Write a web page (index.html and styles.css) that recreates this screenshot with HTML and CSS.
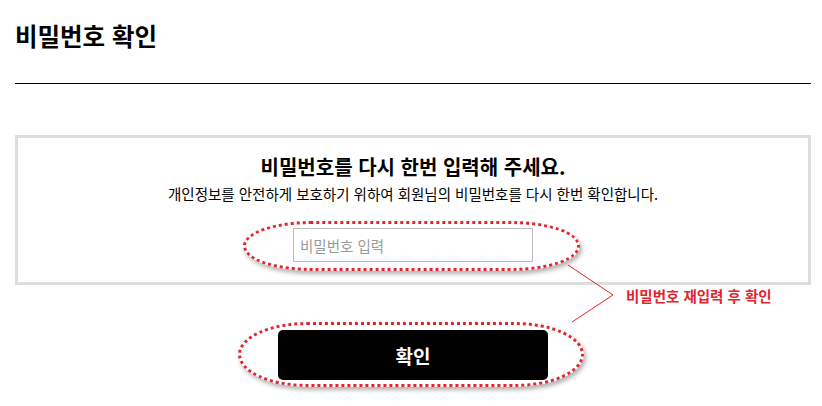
FILE: index.html
```html
<!DOCTYPE html>
<html lang="ko">
<head>
    <meta charset="UTF-8">
    <meta name="viewport" content="width=device-width, initial-scale=1.0">
    <title>비밀번호 확인</title>
    <link rel="stylesheet" href="styles.css">
</head>
<body>
    <div class="page">
        <div class="page-head">
            <h1>비밀번호 확인</h1>
        </div>

        <div class="confirm-box">
            <h2>비밀번호를 다시 한번 입력해 주세요.</h2>
            <p>개인정보를 안전하게 보호하기 위하여 회원님의 비밀번호를 다시 한번 확인합니다.</p>
            <div class="field">
                <input type="password" placeholder="비밀번호 입력">
            </div>
        </div>

        <div class="actions">
            <div class="btn-wrap">
                <button type="button">확인</button>
            </div>
        </div>
    </div>

    <!-- guide annotation over the screen -->
    <svg class="guide-lines" width="822" height="406" viewBox="0 0 822 406">
        <polyline points="568,265 613,295 572,322" fill="none" stroke="#e0252e" stroke-width="1"/>
    </svg>
    <div class="guide-label">비밀번호 재입력 후 확인</div>
</body>
</html>
```

FILE: styles.css
```css
body {
    margin: 0;
    padding: 0;
    font-family: "Noto Sans CJK KR", "Noto Sans", sans-serif;
    color: #000;
    background: #fff;
    position: relative;
    width: 822px;
    height: 406px;
    overflow: hidden;
}
.page {
    padding: 0 11px 0 15px;
}
.page-head {
    padding-top: 19px;
    height: 64px;
    border-bottom: 1px solid #000;
    box-sizing: content-box;
}
h1 {
    margin: 0;
    font-size: 24.5px;
    line-height: 34px;
    font-weight: 700;
}
.confirm-box {
    margin-top: 51px;
    border: 3px solid #dedede;
    padding: 14px 0 20px;
    text-align: center;
}
.confirm-box h2 {
    margin: 0;
    font-size: 20px;
    line-height: 30px;
    font-weight: 700;
}
.confirm-box p {
    margin: 2px 0 0;
    font-size: 14.5px;
    line-height: 20px;
}
.field {
    display: inline-block;
    position: relative;
    margin-top: 24px;
    vertical-align: top;
}
.field input {
    display: block;
    width: 240px;
    height: 34px;
    box-sizing: border-box;
    border: 1px solid #bbb;
    padding: 0 6px;
    font-family: inherit;
    font-size: 14.5px;
    outline: none;
}
.field input::placeholder {
    color: #999;
}
.field::before,
.btn-wrap::before {
    content: '';
    position: absolute;
    border: 3px dotted #e0252e;
    border-radius: 70px / 26px;
    box-shadow: 2px 3px 4px rgba(0, 0, 0, 0.3);
}
.field::before {
    left: -50px;
    right: -47px;
    top: -7px;
    bottom: -9px;
}
.actions {
    margin-top: 45px;
    text-align: center;
}
.btn-wrap {
    display: inline-block;
    position: relative;
}
.btn-wrap::before {
    left: -40px;
    right: -36px;
    top: -8px;
    bottom: -7px;
    border-radius: 70px / 33px;
}
.btn-wrap button {
    display: block;
    width: 270px;
    height: 50px;
    border: none;
    border-radius: 5px;
    background: #000;
    color: #fff;
    font-family: inherit;
    font-size: 19px;
    font-weight: 700;
    cursor: pointer;
}
.guide-lines {
    position: absolute;
    left: 0;
    top: 0;
    pointer-events: none;
}
.guide-label {
    position: absolute;
    left: 626px;
    top: 286px;
    font-size: 14.5px;
    line-height: 20px;
    font-weight: 700;
    color: #e0252e;
}
```
